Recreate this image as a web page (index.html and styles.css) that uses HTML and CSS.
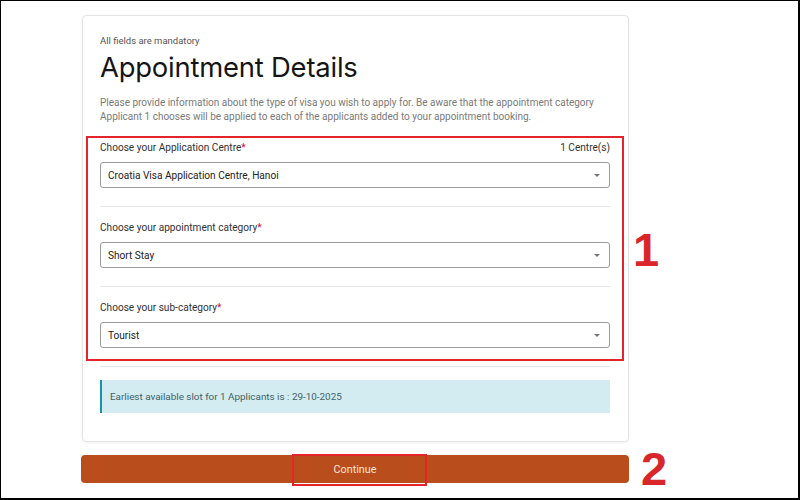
FILE: index.html
```html
<!DOCTYPE html>
<html lang="en">
<head>
<meta charset="utf-8">
<title>Appointment Details</title>
<link rel="stylesheet" href="styles.css">
</head>
<body>
<div class="frame">
  <div class="page">
    <div class="card">
      <div class="note">All fields are mandatory</div>
      <h1 class="title">Appointment Details</h1>
      <p class="intro">Please provide information about the type of visa you wish to apply for. Be aware that the appointment category Applicant 1 chooses will be applied to each of the applicants added to your appointment booking.</p>

      <div class="field">
        <div class="label-row">
          <span class="label">Choose your Application Centre<span class="req">*</span></span>
          <span class="count">1 Centre(s)</span>
        </div>
        <div class="select"><span>Croatia Visa Application Centre, Hanoi</span><span class="caret"></span></div>
      </div>
      <div class="divider"></div>

      <div class="field">
        <div class="label-row">
          <span class="label">Choose your appointment category<span class="req">*</span></span>
        </div>
        <div class="select"><span>Short Stay</span><span class="caret"></span></div>
      </div>
      <div class="divider"></div>

      <div class="field">
        <div class="label-row">
          <span class="label">Choose your sub-category<span class="req">*</span></span>
        </div>
        <div class="select"><span>Tourist</span><span class="caret"></span></div>
      </div>
      <div class="divider divider-last"></div>

      <div class="alert">Earliest available slot for 1 Applicants is : 29-10-2025</div>
    </div>
    <div class="btn">Continue</div>
  </div>

  <div class="mark mark-fields"></div>
  <div class="mark mark-btn"></div>
  <div class="num num-1">1</div>
  <div class="num num-2">2</div>
</div>
</body>
</html>
```

FILE: styles.css
```css
* { box-sizing: border-box; }
html, body { margin: 0; padding: 0; background: #fff; }
body { font-family: "Roboto", "Liberation Sans", Arial, sans-serif; }

.frame {
  position: relative;
  width: 800px;
  height: 500px;
  border-style: solid;
  border-color: #000;
  border-width: 1px 2px 2px 1px;
  overflow: hidden;
}

.page {
  padding: 14px 0 0 80px;
}

.card {
  width: 547px;
  height: 427px;
  margin-left: 1px;
  padding: 19px 18px 0 17px;
  border: 1px solid #e4e4e4;
  border-radius: 4px;
  box-shadow: 0 1px 3px rgba(0,0,0,0.06);
  display: flex;
  flex-direction: column;
}

.note {
  font-size: 9.5px;
  line-height: 12px;
  color: #555;
}

.title {
  margin: 4px 0 0;
  font-family: "Inter", "Roboto", sans-serif;
  font-weight: 400;
  font-size: 27.4px;
  line-height: 32px;
  color: #151515;
  letter-spacing: -0.2px;
}

.intro {
  margin: 13px 0 0;
  font-size: 10px;
  line-height: 14px;
  color: #7a7a7a;
}

.field {
  display: flex;
  flex-direction: column;
  gap: 8px;
}
.intro + .field { margin-top: 18px; }

.label-row {
  display: flex;
  justify-content: space-between;
  font-size: 10.1px;
  line-height: 12px;
  color: #333;
}
.req { color: #c8102e; }
.count { color: #333; }

.select {
  height: 26px;
  border: 1px solid #9c9c9c;
  border-radius: 3px;
  display: flex;
  align-items: center;
  justify-content: space-between;
  padding: 0 9px 0 7px;
  font-size: 10.1px;
  color: #222;
}
.caret {
  width: 0;
  height: 0;
  border-left: 3px solid transparent;
  border-right: 3px solid transparent;
  border-top: 3px solid #777;
}

.divider {
  height: 1px;
  background: #e6e6e6;
  margin: 18px 0 15px;
}
.divider-last { margin-bottom: 13px; }

.alert {
  height: 33px;
  background: #d3ecf1;
  border-left: 2px solid #1895a6;
  display: flex;
  align-items: center;
  padding-left: 8px;
  font-size: 9.9px;
  color: #3f6168;
}

.btn {
  width: 548px;
  height: 28px;
  margin-top: 13px;
  background: #b94d1c;
  border-radius: 4px;
  display: flex;
  align-items: center;
  justify-content: center;
  font-size: 10.8px;
  color: #f6e4d8;
}

/* annotations */
.mark {
  position: absolute;
  border: 2px solid #e3242b;
}
.mark-fields { left: 85px; top: 135px; width: 538px; height: 225px; }
.mark-btn { left: 291px; top: 453px; width: 135px; height: 32px; }

.num {
  position: absolute;
  font-family: "Liberation Sans", Arial, sans-serif;
  font-weight: 700;
  font-size: 47px;
  line-height: 1;
  color: #d9262b;
}
.num-1 { left: 632px; top: 225px; }
.num-2 { left: 640px; top: 444px; }
```
